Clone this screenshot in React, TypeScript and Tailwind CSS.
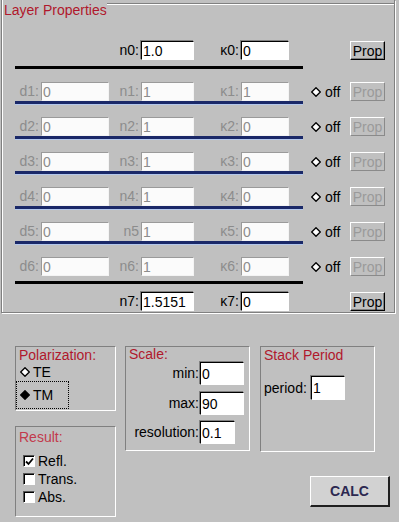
import React from "react";

const RED = "text-[#b0182c]";

function Field({
  value,
  w,
  h = "h-[19px]",
  off,
}: {
  value: string;
  w: string;
  h?: string;
  off?: boolean;
}) {
  return (
    <div
      className={`${w} ${h} flex items-center border pl-[1px] leading-none ${
        off
          ? "border-[#9a9a9a] border-b-[#f4f4f4] border-r-[#f4f4f4] bg-[#fbfbfb] text-[#8c8c8c]"
          : "border-black border-b-white border-r-white bg-white text-black shadow-[-1px_-1px_0_#808080]"
      }`}
    >
      {value}
    </div>
  );
}

function Label({ text, w, off }: { text: string; w: string; off?: boolean }) {
  return (
    <div
      className={`${w} flex justify-end pr-[2px] ${
        off ? "text-[#8c8c8c]" : "text-black"
      }`}
    >
      {text}
    </div>
  );
}

function PropButton({ off }: { off?: boolean }) {
  return (
    <div
      className={`flex h-[19px] w-[35px] items-center justify-center border leading-none ${
        off
          ? "border-white border-b-[#8a8a8a] border-r-[#8a8a8a] text-[#9a9a9a]"
          : "border-white border-b-black border-r-black text-black shadow-[inset_-1px_-1px_0_#808080]"
      }`}
    >
      Prop
    </div>
  );
}

function Diamond({ filled }: { filled?: boolean }) {
  return (
    <svg width="10" height="10" viewBox="0 0 10 10" className="shrink-0">
      <polygon
        points="5,0.7 9.3,5 5,9.3 0.7,5"
        fill={filled ? "#000" : "#fff"}
        stroke="#000"
        strokeWidth="1.3"
      />
    </svg>
  );
}

function LayerRow({ i, nLabel }: { i: number; nLabel?: string }) {
  return (
    <div className="flex h-[19px] items-center">
      <Label text={`d${i}:`} w="w-[26px]" off />
      <Field value="0" w="w-[68px]" off />
      <Label text={nLabel ?? `n${i}:`} w="w-[32px]" off />
      <Field value="1" w="w-[53px]" off />
      <Label text={`κ${i}:`} w="w-[47px]" off />
      <Field value={i === 1 ? "1" : "0"} w="w-[48px]" off />
      <div className="flex w-[61px] items-center gap-[4px] pl-[22px]">
        <Diamond />
        <span className="leading-none">off</span>
      </div>
      <PropButton off />
    </div>
  );
}

function EndRow({ n, k, v }: { n: string; k: string; v: string }) {
  return (
    <div className="flex h-[19px] items-center">
      <div className="w-[94px]" />
      <Label text={n} w="w-[32px]" />
      <Field value={v} w="w-[53px]" />
      <Label text={k} w="w-[47px]" />
      <Field value="0" w="w-[48px]" />
      <div className="w-[61px]" />
      <PropButton />
    </div>
  );
}

const blueLine = "h-[3px] w-[288px] bg-[#1a2868] shadow-[0_1px_0_#b4c8ec]";

function Check({ label, on }: { label: string; on?: boolean }) {
  return (
    <div className="flex h-[18px] items-center gap-[3px] pl-[7px]">
      <div className="flex h-[12px] w-[12px] items-center justify-center border border-[#555] border-b-white border-r-white bg-white shadow-[inset_1px_1px_0_#000]">
        {on && (
          <svg width="9" height="9" viewBox="0 0 9 9">
            <polyline points="1,4.5 3.5,7 8,1.5" fill="none" stroke="#000" strokeWidth="1.8" />
          </svg>
        )}
      </div>
      <span className="leading-none">{label}</span>
    </div>
  );
}

const groupBox = "border border-[#808080] border-b-white border-r-white";

export default function App() {
  return (
    <div className="h-[522px] w-[399px] overflow-hidden bg-[#c0c0c0] font-['Liberation_Sans',Arial,sans-serif] text-[14px] text-black">
      {/* Layer properties frame */}
      <div className="ml-[1px] flex h-[313px] w-[394px] flex-col border-b border-l border-r border-[#808080] shadow-[1px_1px_0_#fff,inset_1px_0_0_#fff]">
        <div className="flex h-[18px] items-start">
          <span className={`ml-[2px] mt-[2px] leading-[16px] ${RED}`}>Layer Properties</span>
          <div className="mt-[3px] flex-1 border-t border-[#808080] shadow-[0_1px_0_#fff]" />
        </div>

        <div className="flex flex-col pl-[13px]">
          <div className="mt-[23px]">
            <EndRow n="n0:" k="κ0:" v="1.0" />
          </div>
          <div className="mt-[6px] h-[3px] w-[288px] bg-black" />

          {[1, 2, 3, 4, 5].map((i) => (
            <div key={i} className="mt-[13px] flex flex-col">
              <LayerRow i={i} nLabel={i === 5 ? "n5" : undefined} />
              <div className={blueLine} />
            </div>
          ))}
          <div className="mt-[13px]">
            <LayerRow i={6} />
          </div>
          <div className="mt-[5px] h-[3px] w-[288px] bg-black" />

          <div className="mt-[8px]">
            <EndRow n="n7:" k="κ7:" v="1.5151" />
          </div>
        </div>
      </div>

      {/* Lower controls */}
      <div className="mt-[33px] flex pl-[15px]">
        <div className="flex w-[101px] flex-col gap-[15px]">
          <div className={`${groupBox} flex h-[65px] flex-col`}>
            <span className={`pl-[3px] leading-[16px] ${RED}`}>Polarization:</span>
            <div className="flex h-[18px] items-center gap-[3px] pl-[4px]">
              <Diamond />
              <span className="leading-none">TE</span>
            </div>
            <div className="flex h-[28px] w-[53px] items-center gap-[3px] border border-dotted border-black pl-[3px]">
              <Diamond filled />
              <span className="leading-none">TM</span>
            </div>
          </div>

          <div className={`${groupBox} flex h-[91px] flex-col`}>
            <span className={`mt-[2px] pl-[3px] leading-[16px] text-[#c23a4c]`}>Result:</span>
            <div className="mt-[7px] flex flex-col">
              <Check label="Refl." on />
              <Check label="Trans." />
              <Check label="Abs." />
            </div>
          </div>
        </div>

        <div className={`${groupBox} ml-[9px] flex h-[105px] w-[125px] flex-col`}>
          <span className={`pl-[3px] leading-[15px] ${RED}`}>Scale:</span>
          <div className="flex h-[23px] items-center">
            <div className="w-[74px] pr-[1px] text-right">min:</div>
            <Field value="0" w="w-[44px]" h="h-[23px]" />
          </div>
          <div className="mt-[7px] flex h-[23px] items-center">
            <div className="w-[74px] pr-[1px] text-right">max:</div>
            <Field value="90" w="w-[44px]" h="h-[23px]" />
          </div>
          <div className="mt-[6px] flex h-[23px] items-center">
            <div className="w-[74px] pr-[1px] text-right">resolution:</div>
            <Field value="0.1" w="w-[35px]" h="h-[23px]" />
          </div>
        </div>

        <div className="ml-[10px] flex w-[130px] flex-col">
          <div className={`${groupBox} flex h-[106px] w-[115px] flex-col`}>
            <span className={`pl-[3px] leading-[16px] ${RED}`}>Stack Period</span>
            <div className="mt-[13px] flex h-[24px] items-center pl-[3px]">
              <span className="w-[47px]">period:</span>
              <Field value="1" w="w-[34px]" h="h-[24px]" />
            </div>
          </div>
          <div className="ml-[50px] mt-[24px] flex h-[31px] w-[80px] items-center justify-center border border-white border-b-2 border-r-2 border-b-[#202020] border-r-[#202020] bg-[#d2d2d2] font-bold text-[#2c2850]">
            CALC
          </div>
        </div>
      </div>
    </div>
  );
}
